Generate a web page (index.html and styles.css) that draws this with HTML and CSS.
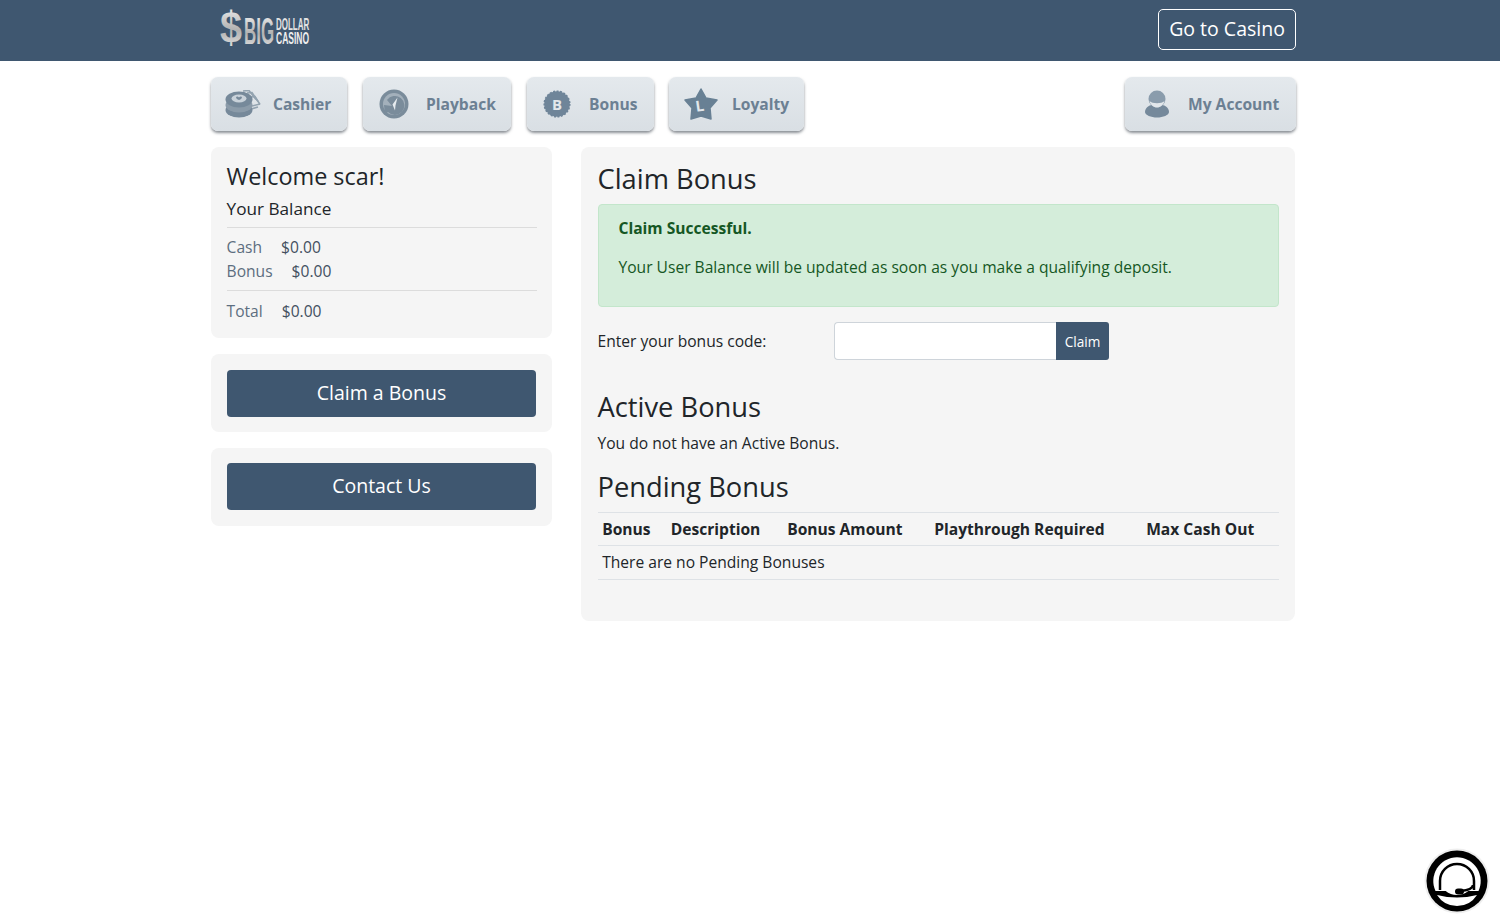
FILE: index.html
```html
<!DOCTYPE html>
<html lang="en">
<head>
<meta charset="utf-8">
<title>Claim Bonus</title>
<link rel="stylesheet" href="styles.css">
</head>
<body>
<header class="topbar">
  <div class="wrap topbar-in">
    <svg class="logo" width="96" height="40" viewBox="0 0 96 40">
      <defs>
        <linearGradient id="silver" x1="0" y1="0" x2="0" y2="1">
          <stop offset="0" stop-color="#f4f4f4"/><stop offset=".55" stop-color="#b0b0b0"/><stop offset="1" stop-color="#ececec"/>
        </linearGradient>
      </defs>
      <text class="logo-dollar" transform="translate(0 33) scale(.9 1)" fill="url(#silver)">$</text>
      <text class="logo-big" transform="translate(24 34) scale(.47 1)" fill="url(#silver)">BIG</text>
      <text class="logo-small" transform="translate(56 20) scale(.47 1)" fill="#e2e2e2">DOLLAR</text>
      <text class="logo-small" transform="translate(56 34) scale(.5 1)" fill="#eeeeee">CASINO</text>
    </svg>
    <a class="casino-btn" href="#">Go to Casino</a>
  </div>
</header>

<div class="wrap">
  <nav class="tabs">
    <a class="tab tab-cashier" href="#">
      <svg width="36" height="28" viewBox="0 0 36 28">
        <g fill="none" stroke="#93a3b0" stroke-width="1.600"><path d="M18 1l6-.500 7 9"/><path d="M22 3l5-.500 6 9"/><path d="M26 7l4-.500 5 8"/><path d="M27 16l8-2"/><path d="M26 19l7-2"/></g>
        <ellipse cx="14" cy="20" rx="13.500" ry="7.500" fill="#76899a"/>
        <ellipse cx="14" cy="15" rx="13.500" ry="7.500" fill="#8b9ba9"/>
        <ellipse cx="14" cy="9.500" rx="13.500" ry="8" fill="#76899a"/>
        <ellipse cx="14" cy="8.500" rx="7.500" ry="4" fill="#c9d2da"/>
        <path d="M11 7c1-1 2-.500 3 .500 1-1 2-1.500 3-.500 0 1.500-1.500 2.500-3 3-1.500-.500-3-1.500-3-3z" fill="#76899a"/>
      </svg>
      <span>Cashier</span>
    </a>
    <a class="tab tab-playback" href="#">
      <svg width="30" height="30" viewBox="0 0 30 30">
        <circle cx="15" cy="15" r="14.500" fill="#7a8c9b"/>
        <circle cx="15" cy="15" r="11" fill="#a3b0bb"/>
        <path d="M8 11a9.500 9.500 0 1 1 1 12l-3 2-1-9 8 1z" fill="#7a8c9b"/>
        <path d="M18.500 8.500l-5 7 2.500 6 .500-5z" fill="#e6ebef"/>
      </svg>
      <span>Playback</span>
    </a>
    <a class="tab tab-bonus" href="#">
      <svg width="28" height="28" viewBox="0 0 28 28"><circle cx="14" cy="14" r="12.800" fill="#6f8599" stroke="#6f8599" stroke-width="1.500" stroke-dasharray="2 1.500"/><text class="icon-letter" x="14" y="19.500" text-anchor="middle">B</text></svg>
      <span>Bonus</span>
    </a>
    <a class="tab tab-loyalty" href="#">
      <svg width="34" height="32" viewBox="0 0 34 32"><path d="M17 1l5 9 11 2-7 8 1 11-10-3-10 3 1-11-7-8 11-2z" fill="#688094" stroke="#688094" stroke-linejoin="round" stroke-width="1.500"/><text class="icon-letter" x="16" y="23" text-anchor="middle" transform="rotate(-8 17 20)">L</text></svg>
      <span>Loyalty</span>
    </a>
    <a class="tab tab-account" href="#">
      <svg width="26" height="28" viewBox="0 0 26 28"><path d="M1 22c0-4 4-7 7-7h10c3 0 7 3 7 7 0 3-6 5.500-12 5.500S1 25 1 22z" fill="#75899b"/><circle cx="13" cy="9" r="8.500" fill="#8a9cac"/><path d="M5.500 11c3 3 12 3 15 0-1 4-4 6.500-7.500 6.500S6.500 15 5.500 11z" fill="#e2e7eb"/></svg>
      <span>My Account</span>
    </a>
  </nav>

  <div class="layout">
    <aside class="side">
      <section class="card balance">
        <h4 class="welcome">Welcome scar!</h4>
        <h5 class="balance-title">Your Balance</h5>
        <hr class="rule rule-first">
        <p class="line"><span class="label">Cash</span><span class="amount">$0.00</span></p>
        <p class="line"><span class="label">Bonus</span><span class="amount">$0.00</span></p>
        <hr class="rule rule-second">
        <p class="line"><span class="label">Total</span><span class="amount">$0.00</span></p>
      </section>
      <section class="card btn-card"><a class="big-btn" href="#">Claim a Bonus</a></section>
      <section class="card btn-card"><a class="big-btn" href="#">Contact Us</a></section>
    </aside>

    <main class="card main">
      <h3 class="heading heading-claim">Claim Bonus</h3>
      <div class="alert">
        <p class="alert-title">Claim Successful.</p>
        <p class="alert-text">Your User Balance will be updated as soon as you make a qualifying deposit.</p>
      </div>
      <form class="code-form">
        <label class="code-label" for="code">Enter your bonus code:</label>
        <input class="code-input" id="code" type="text">
        <button class="code-btn" type="button">Claim</button>
      </form>
      <h3 class="heading heading-active">Active Bonus</h3>
      <p class="no-active">You do not have an Active Bonus.</p>
      <h3 class="heading heading-pending">Pending Bonus</h3>
      <table class="pending">
        <thead>
          <tr><th class="c1">Bonus</th><th class="c2">Description</th><th class="c3">Bonus Amount</th><th class="c4">Playthrough Required</th><th>Max Cash Out</th></tr>
        </thead>
        <tbody>
          <tr><td colspan="5">There are no Pending Bonuses</td></tr>
        </tbody>
      </table>
    </main>
  </div>
</div>

<a class="chat" href="#" aria-label="Chat">
  <svg width="66" height="66" viewBox="0 0 66 66">
    <circle cx="33" cy="33" r="32.500" fill="#eee"/>
    <circle cx="33" cy="33" r="30.500" fill="#000"/>
    <path d="M11.500 43a23.700 23.700 0 1 1 43 0z" fill="#fff"/>
    <ellipse cx="33" cy="33" rx="16" ry="14" fill="#fff"/>
    <path d="M16 42v-9a17 17 0 0 1 34 0v9" fill="none" stroke="#000" stroke-width="2.500"/>
    <path d="M13 47q20 5 40 0q-7 11-20 11t-20-11z" fill="#fff"/>
    <path d="M49 37c0 3-4 5-12 6" fill="none" stroke="#000" stroke-width="2.500"/>
    <rect x="31" y="40.500" width="9" height="6" rx="3" fill="#000"/>
  </svg>
</a>
</body>
</html>
```
FILE: styles.css
```css
* { box-sizing: border-box; }
html, body { margin: 0; padding: 0; }
body { background: #fff; color: #212529; font-family: "Open Sans", "Liberation Sans", sans-serif; font-size: 15.600px; line-height: 23.400px; }
a { text-decoration: none; }
.wrap { width: 1085px; margin-left: 211px; }
.topbar { background: #3f5770; height: 61px; }
.topbar-in { display: flex; justify-content: space-between; align-items: center; height: 61px; padding-left: 9px; }
.topbar-in .logo { display: block; margin-top: -2px; overflow: visible; }
.logo-dollar { font: 700 44px "Liberation Sans", sans-serif; }
.logo-big { font: 700 36px "Liberation Sans", sans-serif; }
.logo-small { font: 700 17px "Liberation Sans", sans-serif; }
.casino-btn { display: block; height: 41px; width: 138px; margin-top: -3px; border: 1px solid #fff; border-radius: 5px; color: #fff; font-size: 19.500px; line-height: 38px; text-align: center; }

.tabs { display: flex; gap: 15px; padding-top: 16px; height: 70px; }
.tab { display: flex; align-items: center; height: 54px; padding: 0 16px 0 14px; border-radius: 7px; background: linear-gradient(#e4e9ed, #d9dfe4); box-shadow: 0 2px 3px rgba(40, 50, 60, .55); color: #6c8093; font-weight: 700; font-size: 15.600px; white-space: nowrap; }
.tab svg { flex: none; display: block; }
.tab span { padding-top: 2px; }
.tab-cashier { width: 136px; }
.tab-cashier span { margin-left: 12px; }
.tab-playback { width: 148px; padding-left: 16px; margin-left: 1px; }
.tab-playback span { margin-left: 17px; }
.tab-bonus { width: 127px; padding-left: 16px; margin-left: 1px; }
.tab-bonus span { margin-left: 18px; }
.tab-loyalty { width: 135px; padding-left: 15px; }
.tab-loyalty span { margin-left: 14px; }
.tab-account { width: 171px; margin-left: auto; padding-left: 19px; }
.tab-account span { margin-left: 18px; }

.layout { display: flex; align-items: flex-start; gap: 29px; margin-top: 16px; }
.side { display: flex; flex-direction: column; gap: 16px; width: 341px; flex: none; }
.card { background: #f5f5f5; border-radius: 8px; }
.balance { height: 191px; padding: 15px 15px 0 15.600px; }
.welcome { margin: 0; font-size: 23.400px; font-weight: 400; line-height: 29px; }
.balance-title { margin: 6px 0 0; font-size: 17.160px; font-weight: 400; line-height: 24px; }
.rule { border: 0; border-top: 1px solid #dcdcdc; margin: 0; }
.rule-first { margin-top: 6px; margin-bottom: 8.400px; }
.rule-second { margin-top: 7px; margin-bottom: 8.400px; }
.line { margin: 0; color: #43505f; }
.label { color: #5d6e80; margin-right: 19px; }
.btn-card { height: 78px; padding: 15.600px 15.600px 0; }
.btn-card + .btn-card { padding-top: 15px; }
.big-btn { display: block; height: 47px; border-radius: 4px; background: #3f5770; color: #fff; font-size: 19.500px; line-height: 46px; text-align: center; }

.main { width: 714px; height: 474px; padding: 13px 15.600px 0 16.500px; }
.heading { margin: 0; font-size: 27.300px; font-weight: 400; line-height: 38px; }
.alert { height: 103px; margin-top: 6px; padding: 12px 20px 0; border: 1px solid #c3e6cb; border-radius: 4px; background: #d4edda; color: #155724; }
.alert-title { margin: 0 0 16px; font-weight: 700; }
.alert-text { margin: 0; }
.code-form { display: flex; align-items: center; margin-top: 15px; height: 38px; }
.code-label { width: 236.500px; flex: none; padding-top: 1px; }
.code-input { width: 222px; height: 38px; padding: 0 12px; border: 1px solid #ced4da; border-right: 0; border-radius: 4px 0 0 4px; background: #fff; }
.code-btn { width: 53px; height: 38px; padding: 0; border: 0; border-radius: 0 3px 3px 0; background: #3f5770; color: #fff; font: 400 13.650px "Open Sans", sans-serif; }
.heading-active { margin-top: 28px; }
.no-active { margin: 6px 0 0; }
.heading-pending { margin-top: 13px; }
.pending { width: 100%; margin-top: 5.200px; border-collapse: collapse; table-layout: fixed; }
.pending th, .pending td { border-top: 1px solid #dee2e6; border-bottom: 1px solid #dee2e6; text-align: left; font-weight: 400; }
.pending th { padding: 5.200px 4.680px 4.200px; font-weight: 700; }
.pending td { padding: 4.680px; }
.c1 { width: 68.500px; }
.c2 { width: 116.500px; }
.c3 { width: 147px; }
.c4 { width: 212px; }

.chat { position: fixed; left: 1424px; top: 848px; width: 66px; height: 66px; display: block; }
.chat svg { display: block; }
.icon-letter { font: 700 15px "Open Sans", sans-serif; fill: #e2e7eb; }
```
